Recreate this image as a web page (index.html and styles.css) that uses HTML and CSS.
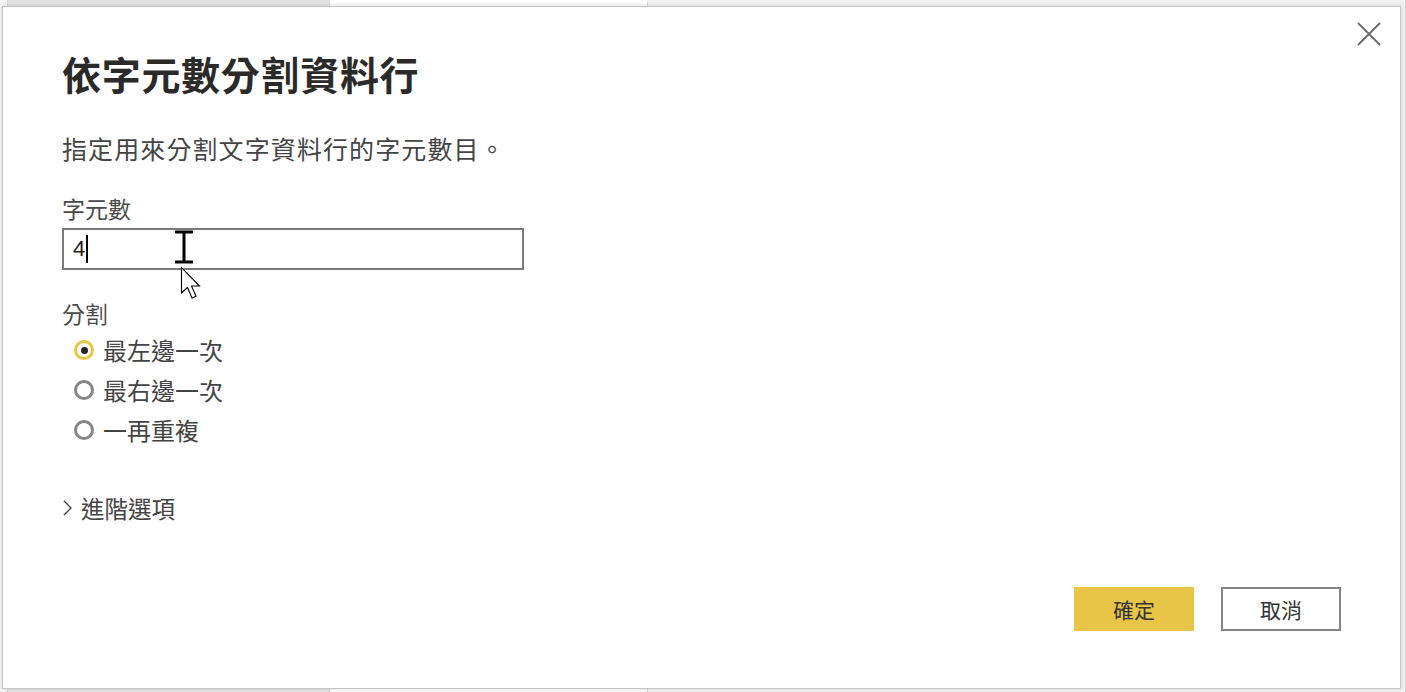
FILE: index.html
```html
<!DOCTYPE html>
<html lang="zh-Hant">
<head>
<meta charset="utf-8">
<title>依字元數分割資料行</title>
<link rel="stylesheet" href="styles.css">
</head>
<body>
<div class="backdrop">
  <div class="bg-strip">
    <div class="bg-cell bg-edge"></div>
    <div class="bg-cell bg-gray"></div>
    <div class="bg-cell bg-white"></div>
    <div class="bg-cell bg-light"></div>
  </div>
</div>

<div class="dialog" role="dialog">
  <button class="close" aria-label="關閉">
    <svg width="24" height="24" viewBox="0 0 24 24"><path d="M1 1 L23 23 M23 1 L1 23" stroke="#6b6b6b" stroke-width="1.8" fill="none"/></svg>
  </button>

  <h1 class="title">依字元數分割資料行</h1>
  <p class="subtitle">指定用來分割文字資料行的字元數目。</p>

  <label class="field-label">字元數</label>
  <div class="input">
    <span class="input-value">4</span><span class="caret"></span>
  </div>

  <div class="group-label">分割</div>
  <div class="radios">
    <div class="radio-row"><span class="radio checked"></span><span class="radio-text">最左邊一次</span></div>
    <div class="radio-row"><span class="radio"></span><span class="radio-text">最右邊一次</span></div>
    <div class="radio-row"><span class="radio"></span><span class="radio-text">一再重複</span></div>
  </div>

  <div class="advanced">
    <svg class="chevron" width="9" height="16" viewBox="0 0 9 16"><path d="M1 1 L8 8 L1 15" stroke="#444" stroke-width="1.4" fill="none"/></svg>
    <span>進階選項</span>
  </div>

  <div class="footer">
    <button class="btn primary">確定</button>
    <button class="btn secondary">取消</button>
  </div>

  <svg class="ibeam" width="22" height="34" viewBox="0 0 22 34"><path d="M2 2 H20 M11 2 V32 M2 32 H20" stroke="#000" stroke-width="3" fill="none"/></svg>
  <svg class="pointer" width="28" height="40" viewBox="0 0 28 40"><path d="M1.5 1.5 L1.5 27 L7.5 21.5 L12 32 L16 30.3 L11.5 20 L19.5 20 Z" fill="#fff" stroke="#000" stroke-width="1.1" stroke-linejoin="miter"/></svg>
</div>
</body>
</html>
```

FILE: styles.css
```css
html, body {
  margin: 0;
  padding: 0;
  width: 1406px;
  height: 692px;
  overflow: hidden;
  background: #f3f3f3;
  font-family: "Noto Sans CJK TC", "Noto Sans", sans-serif;
}

.backdrop {
  height: 692px;
  background: #ffffff;
}

.bg-strip {
  display: grid;
  grid-template-columns: 8px 322px 318px 1fr;
  height: 692px;
}

.bg-cell {
  border-right: 1px solid #d6d6d6;
}

.bg-edge { background: #f4f4f4; }
.bg-gray { background: #e2e2e2; }
.bg-white { background: #fafafa; border-top: 3px solid #ffffff; }
.bg-light { background: #f0f0f0; }

.dialog {
  position: absolute;
  left: 2px;
  top: 6px;
  width: 1399px;
  height: 683px;
  box-sizing: border-box;
  border: 1px solid #c4c4c4;
  background: #ffffff;
  box-shadow: 0 0 4px rgba(0,0,0,0.12);
  padding: 41px 0 0 59px;
  display: flex;
  flex-direction: column;
  align-items: flex-start;
  color: #3b3a39;
}

.close {
  position: absolute;
  left: 1354px;
  top: 15px;
  width: 24px;
  height: 24px;
  padding: 0;
  border: 0;
  background: transparent;
  display: flex;
}

.title {
  margin: 0;
  font-size: 39px;
  line-height: 50px;
  font-weight: 700;
  color: #2b2a29;
  letter-spacing: 0.7px;
}

.subtitle {
  margin: 32px 0 0 0;
  font-size: 25px;
  line-height: 36px;
  color: #444;
  letter-spacing: 1.1px;
}

.field-label {
  margin-top: 26px;
  font-size: 23px;
  line-height: 32px;
  color: #4a4a4a;
}

.input {
  margin-top: 4px;
  width: 462px;
  height: 42px;
  box-sizing: border-box;
  border: 2px solid #7a7a7a;
  display: flex;
  align-items: center;
  padding-left: 9px;
  font-family: "Liberation Sans", "Noto Sans", sans-serif;
  font-size: 22px;
  color: #222;
}

.caret {
  display: inline-block;
  width: 2px;
  height: 28px;
  background: #000;
  margin-left: 1px;
}

.group-label {
  margin-top: 27px;
  font-size: 23px;
  line-height: 32px;
  color: #4a4a4a;
}

.radios {
  margin-top: 1px;
  display: flex;
  flex-direction: column;
  padding-left: 12px;
}

.radio-row {
  height: 40px;
  display: flex;
  align-items: center;
  gap: 9px;
}

.radio {
  width: 20px;
  height: 20px;
  box-sizing: border-box;
  border: 3px solid #858585;
  border-radius: 50%;
  background: #fff;
  display: flex;
  align-items: center;
  justify-content: center;
}

.radio.checked {
  border-color: #e6c640;
}

.radio.checked::after {
  content: "";
  width: 7px;
  height: 7px;
  border-radius: 50%;
  background: #252423;
}

.radio-text {
  font-size: 24px;
  line-height: 32px;
  color: #444;
}

.advanced {
  margin-top: 42px;
  display: flex;
  align-items: center;
  gap: 9px;
  font-size: 23.5px;
  line-height: 32px;
  color: #444;
  padding-left: 1px;
}

.chevron {
  display: block;
}

.footer {
  margin-top: auto;
  align-self: stretch;
  display: flex;
  justify-content: flex-end;
  gap: 27px;
  padding: 0 59px 57px 0;
}

.btn {
  width: 120px;
  height: 44px;
  box-sizing: border-box;
  font-family: "Noto Sans CJK TC", "Noto Sans", sans-serif;
  font-size: 21px;
  color: #333;
  padding: 0;
}

.btn.primary {
  background: #e8c547;
  border: 0;
}

.btn.secondary {
  background: #fff;
  border: 2px solid #858585;
}

.ibeam {
  position: absolute;
  left: 170px;
  top: 223px;
}

.pointer {
  position: absolute;
  left: 177px;
  top: 259px;
}
```
